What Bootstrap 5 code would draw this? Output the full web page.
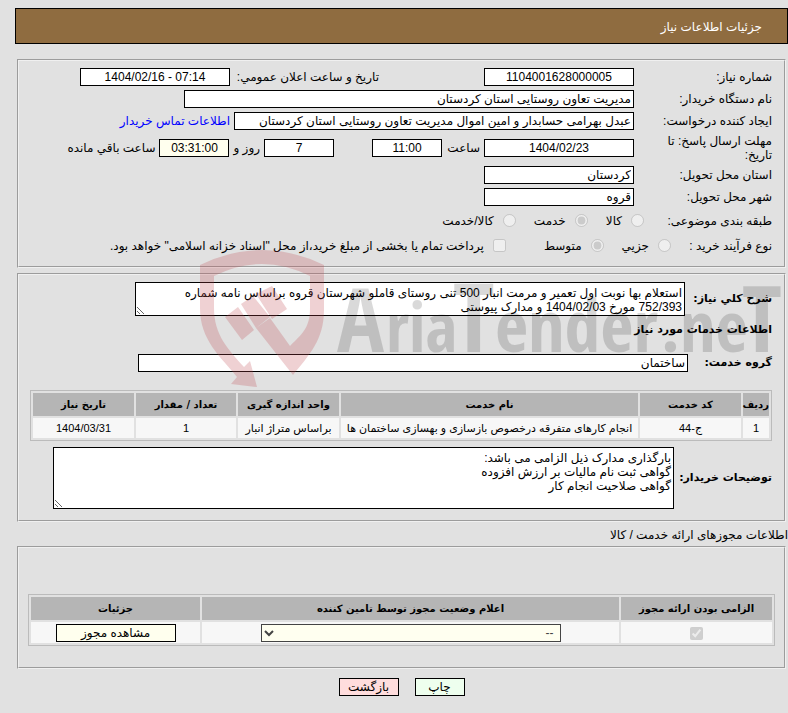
<!DOCTYPE html>
<html lang="fa" dir="rtl">
<head>
<meta charset="utf-8">
<meta name="viewport" content="width=device-width, initial-scale=1">
<title>جزئیات اطلاعات نیاز</title>
<link href="https://cdn.jsdelivr.net/npm/bootstrap@5.3.0/dist/css/bootstrap.min.css" rel="stylesheet">
<style>
body{background:#e1e1e1;color:#000;font:12px/14px "Liberation Sans","DejaVu Sans",sans-serif;overflow-x:hidden}
.page-wrap{padding:8px 0 18px 15px}
.title-bar{background:#8f6c40;border:1px solid #000;color:#fff;height:36px;padding:2px 25px 0 0;margin-bottom:15px}
.panel{border:2px groove #f0f0f0;margin:0 2px 5px 2px;padding:7px 12px 0 11px}
.panel-info{padding-bottom:6px}
.panel-need{padding-bottom:11px;margin-bottom:6px}
.panel-lic{padding:46px 9px 21px 9px;margin-bottom:9px}
.line{display:flex;align-items:center;margin-bottom:4px;white-space:nowrap}
.opts{height:21px}
.cap{width:138px;flex:none}
.cap-wrap{width:114px;margin-left:24px;flex:none;white-space:normal}
.cap-type{width:128px;flex:none}
.cap-proc{width:101px;flex:none}
.cap-date{width:145px;margin-right:105px}
.cap-hour{width:34px;margin:0 4px}
.strong-cap{font:bold 11px/14px "DejaVu Sans",sans-serif;flex:none}
.sub-title{padding:3px 0 4px;margin-bottom:13px}
.cap-desc{width:87px}
.cap-group{width:84px}
.cap-note{width:98px}
.fld{background:#fff;border:1px solid #000;border-radius:0;color:#000;font:inherit;padding:0 2px;height:18px;line-height:16px;flex:none}
.fld.num{text-align:center}
textarea.fld{line-height:14px;padding:3px 2px;overflow:hidden;resize:both}
.w-mid{width:150px}.w-sm{width:70px}.w-long{width:450px}.w-req{width:400px}.w-desc{width:550px}.w-note{width:621px}
textarea.h-desc{height:34px}
textarea.h-note{height:62px}
.fld.cream{background:#ffe}
.days{margin-right:38px}
.contact{color:#00f;text-decoration:none}
.opt{display:flex;align-items:center;gap:9px;margin-left:18px}
.opt-wide{margin-left:38px}
.opt input,.lic-tick{width:13px;height:13px;margin:0;flex:none}
.grid-tb{width:100%;border:1px solid #bbb;border-collapse:separate;border-spacing:2px;text-align:center;table-layout:fixed}
.grid-need{margin:18px 0 6px}
.grid-tb th{background:#b5b5b5;font:bold 10px/14px "DejaVu Sans",sans-serif;height:23px;padding:0;text-align:center;white-space:nowrap}
.grid-tb td{background:#f7f7f7;font-size:11px;height:20px;padding:0;white-space:nowrap}
.grid-tb td.tall{height:21px}
.c-row{width:26px}.c-code{width:101px}.c-unit{width:101px}.c-qty{width:100px}.c-date{width:101px}
.c-must{width:151px}.c-det{width:169px}
.btn-box{border:1px solid #000;color:#000;font:12px/16px "Liberation Sans","DejaVu Sans",sans-serif;height:18px;padding:0;border-radius:0}
.sel{background:#fffff0;border:1px solid #444;color:#444;width:300px;height:18px;font-size:12px;padding:0 2px;vertical-align:middle}
.b-view{background:#ffe;width:120px;vertical-align:middle}.b-print{background:#efe;width:50px}.b-back{background:#fdd;width:60px}
.water{position:absolute;left:195px;top:245px;pointer-events:none}
</style>
</head>
<body>
<main class="page-wrap position-relative overflow-hidden">
<header class="title-bar d-flex align-items-center">جزئیات اطلاعات نیاز</header>

<fieldset class="panel panel-info">
<div class="line"><label class="cap" for="no">شماره نیاز:</label><input id="no" class="fld num w-mid" value="1104001628000005" readonly><label class="cap-date" for="pub">تاریخ و ساعت اعلان عمومي:</label><input id="pub" dir="ltr" class="fld num w-mid me-1" value="1404/02/16 - 07:14" readonly></div>
<div class="line"><label class="cap" for="org">نام دستگاه خریدار:</label><input id="org" class="fld w-long" value="مدیریت تعاون روستایی استان کردستان" readonly></div>
<div class="line"><label class="cap" for="req">ایجاد کننده درخواست:</label><input id="req" class="fld w-req" value="عبدل بهرامی حسابدار و امین اموال مدیریت تعاون روستایی استان کردستان" readonly><a href="#" class="contact me-1">اطلاعات تماس خریدار</a></div>
<div class="line"><label class="cap-wrap" for="dl">مهلت ارسال پاسخ: تا تاریخ:</label><input id="dl" class="fld num w-mid" value="1404/02/23" readonly><label class="cap-hour" for="hr">ساعت</label><input id="hr" class="fld num w-sm" value="11:00" readonly><input aria-label="روز" class="fld num w-sm days" value="7" readonly><span class="mx-1">روز و</span><input id="left" class="fld num w-sm cream" value="03:31:00" readonly><label class="mx-1" for="left">ساعت باقي مانده</label></div>
<div class="line"><label class="cap" for="prov">استان محل تحویل:</label><input id="prov" class="fld w-mid" value="کردستان" readonly></div>
<div class="line"><label class="cap" for="city">شهر محل تحویل:</label><input id="city" class="fld w-mid" value="قروه" readonly></div>
<div class="line opts mt-1"><span class="cap-type">طبقه بندی موضوعی:</span><label class="opt"><input type="radio" name="kind" disabled>کالا</label><label class="opt"><input type="radio" name="kind" checked disabled>خدمت</label><label class="opt"><input type="radio" name="kind" disabled>کالا/خدمت</label></div>
<div class="line opts"><span class="cap-proc">نوع فرآیند خرید :</span><label class="opt"><input type="radio" name="proc" disabled>جزیي</label><label class="opt opt-wide"><input type="radio" name="proc" checked disabled>متوسط</label><label class="opt ms-0"><input type="checkbox" disabled>پرداخت تمام یا بخشی از مبلغ خرید،از محل "اسناد خزانه اسلامی" خواهد بود.</label></div>
</fieldset>

<fieldset class="panel panel-need">
<div class="line"><label class="strong-cap cap-desc" for="desc">شرح کلي نیاز:</label><textarea id="desc" class="fld w-desc h-desc" readonly>استعلام بها نوبت اول تعمیر و مرمت انبار 500 تنی روستای قاملو شهرستان قروه براساس نامه شماره
752/393 مورخ 1404/02/03 و مدارک پیوستی</textarea></div>
<h2 class="strong-cap sub-title">اطلاعات خدمات مورد نیاز</h2>
<div class="line mb-0"><label class="strong-cap cap-group" for="grp">گروه خدمت:</label><input id="grp" class="fld w-desc" value="ساختمان" readonly></div>
<table class="grid-tb grid-need">
<colgroup><col class="c-row"><col class="c-code"><col><col class="c-unit"><col class="c-qty"><col class="c-date"></colgroup>
<thead><tr><th>ردیف</th><th>کد خدمت</th><th>نام خدمت</th><th>واحد اندازه گیری</th><th>تعداد / مقدار</th><th>تاریخ نیاز</th></tr></thead>
<tbody><tr><td>1</td><td>ج-44</td><td>انجام کارهای متفرقه درخصوص بازسازی و بهسازی ساختمان ها</td><td>براساس متراژ انبار</td><td>1</td><td>1404/03/31</td></tr></tbody>
</table>
<div class="line mb-0"><label class="strong-cap cap-note" for="note">توضیحات خریدار:</label><textarea id="note" class="fld w-note h-note" readonly>بارگذاری مدارک ذیل الزامی می باشد:
گواهی ثبت نام مالیات بر ارزش افزوده
گواهی صلاحیت انجام کار</textarea></div>
</fieldset>

<div class="mb-1">اطلاعات مجوزهای ارائه خدمت / کالا</div>
<fieldset class="panel panel-lic">
<table class="grid-tb">
<colgroup><col class="c-must"><col><col class="c-det"></colgroup>
<thead><tr><th>الزامی بودن ارائه مجوز</th><th>اعلام وضعیت مجوز توسط تامین کننده</th><th>جزئیات</th></tr></thead>
<tbody><tr><td class="tall"><input type="checkbox" class="lic-tick align-middle" aria-label="الزامی" checked disabled></td><td class="tall"><select class="sel" aria-label="وضعیت مجوز"><option>--</option></select></td><td class="tall"><button type="button" class="btn-box b-view">مشاهده مجوز</button></td></tr></tbody>
</table>
</fieldset>
<div class="d-flex justify-content-center gap-3"><button type="button" class="btn-box b-print">چاپ</button><button type="button" class="btn-box b-back">بازگشت</button></div>

<svg class="water" width="610" height="145" viewBox="195 245 610 145" direction="ltr" aria-hidden="true">
<g fill="rgb(190,70,80)" fill-opacity=".25">
<path d="M200 265Q231 250 262 250Q293 250 324 265V310C324 340 309 355 293 375L256 328L270 318L290 346C302 334 310 328 310 308V276Q286 264 262 264Q238 264 214 276V308C214 335 228 349 244 367L250 361L257 387L231 384L237 377C220 356 200 340 200 308Z"/>
<path d="M225 317L238 307L254 330L242 340ZM241 304L253 296L270 317L256 328ZM256 294L272 286L287 309L272 319Z"/>
</g>
<g fill="#000" fill-opacity=".15" font-family="'Open Sans Condensed','Open Sans',sans-serif" font-weight="700">
<text y="352" font-size="70"><tspan x="337" font-size="88">A</tspan><tspan x="386" font-size="68">ria</tspan><tspan x="453" font-size="96">T</tspan><tspan x="495" font-size="72">ender</tspan><tspan x="661">.ne</tspan><tspan x="742" font-size="92">T</tspan></text>
</g>
</svg>
</main>
<script src="https://cdn.jsdelivr.net/npm/bootstrap@5.3.0/dist/js/bootstrap.bundle.min.js"></script>
</body>
</html>
